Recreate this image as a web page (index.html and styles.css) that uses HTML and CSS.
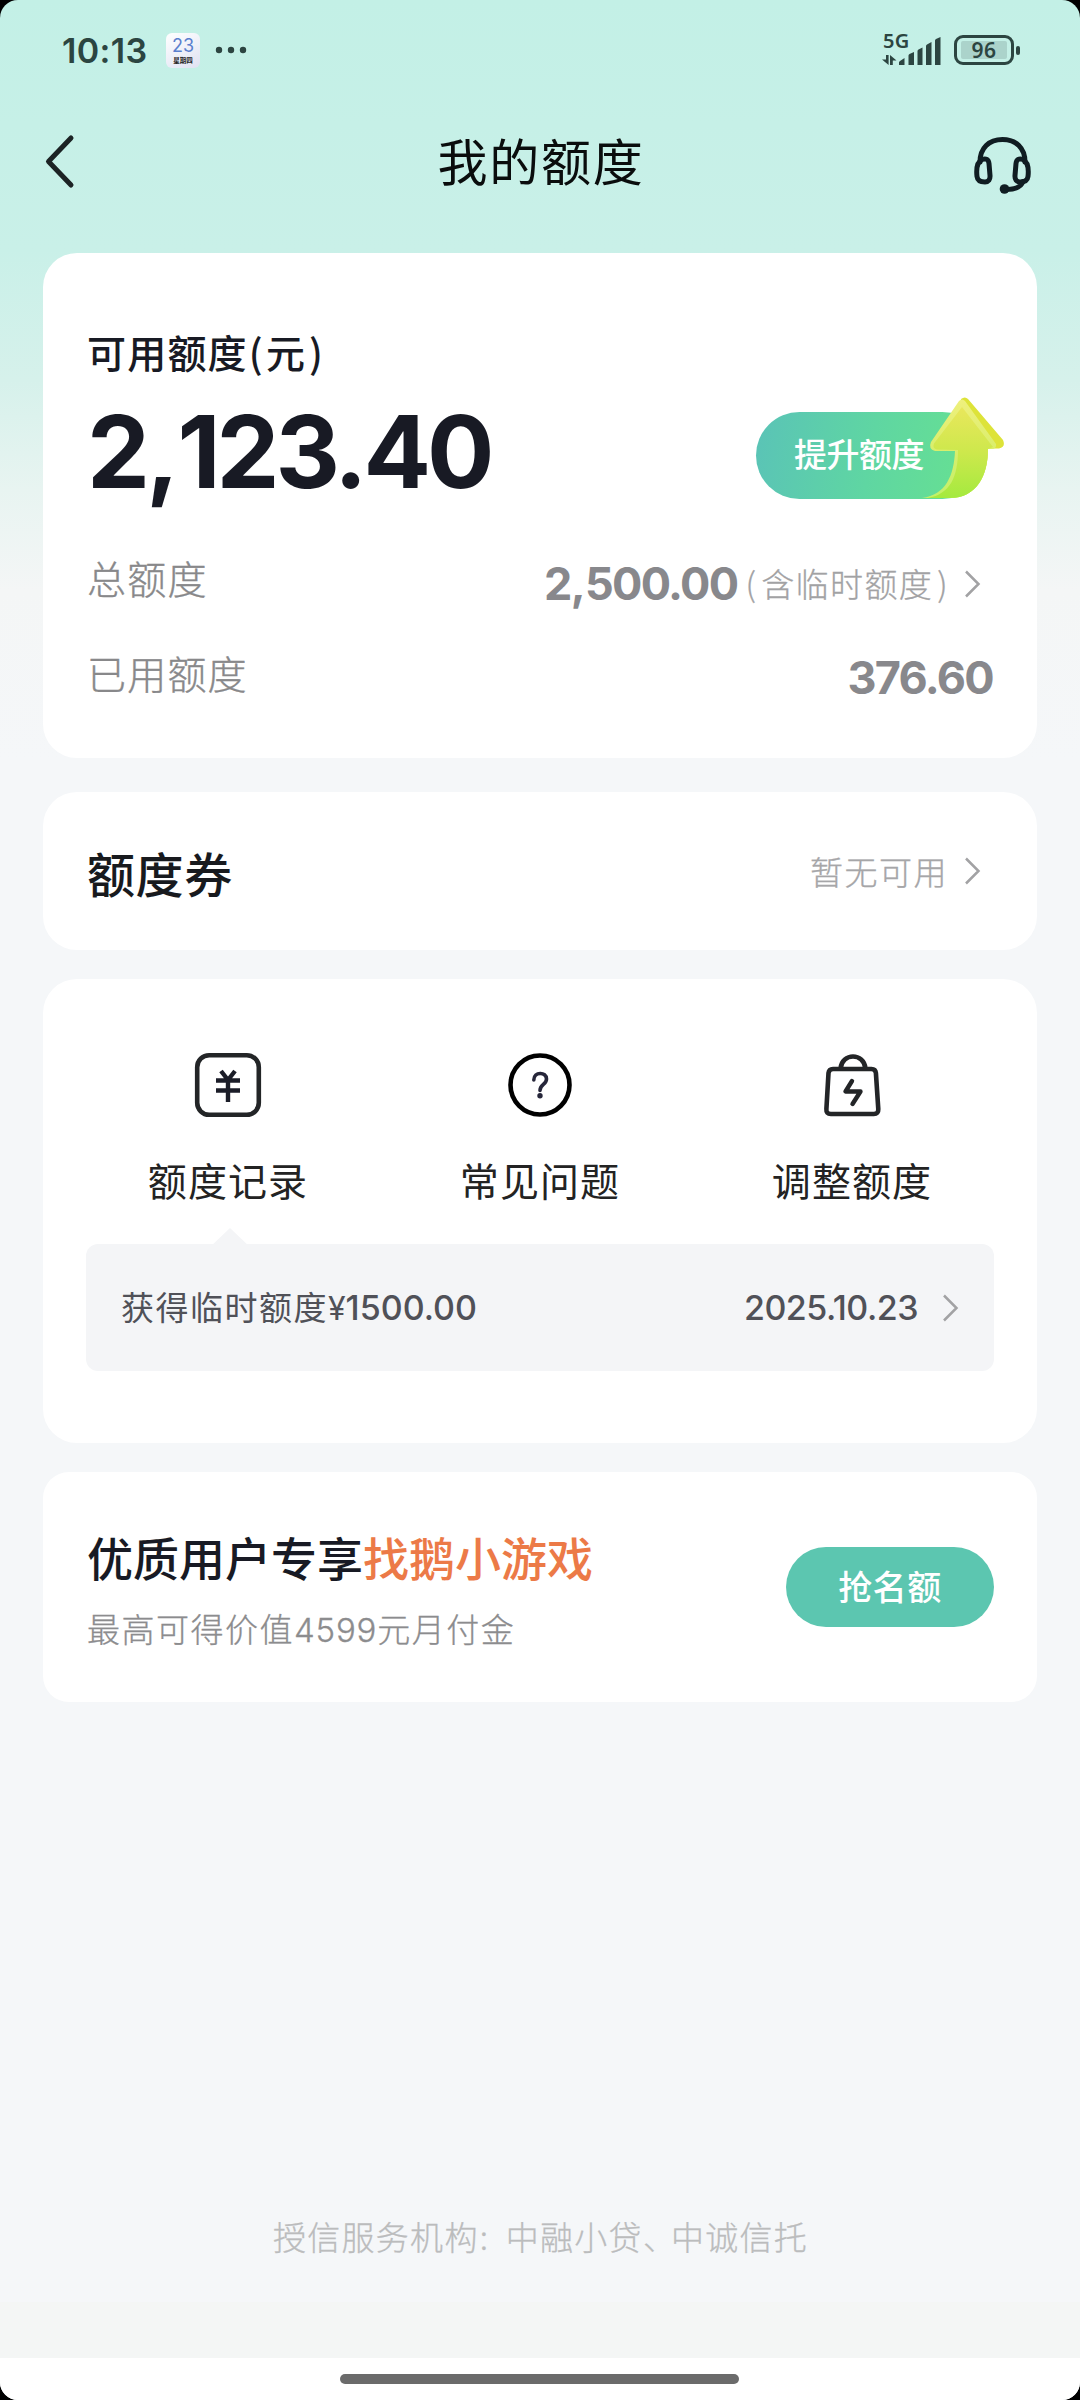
FILE: index.html
```html
<!DOCTYPE html>
<html lang="zh-CN">
<head>
<meta charset="utf-8">
<title>我的额度</title>
<link rel="stylesheet" href="styles.css">
</head>
<body>
<div class="screen">
  <div class="statusbar">
    <span class="clock">10:13</span>
    <span class="cal"><b>23</b><i>星期四</i></span>
    <svg class="dots" width="32" height="8" viewBox="0 0 32 8"><circle cx="4" cy="4" r="3.2"/><circle cx="16" cy="4" r="3.2"/><circle cx="28" cy="4" r="3.2"/></svg>
    <div class="signal">
      <span class="net">5G</span>
      <svg width="60" height="32" viewBox="0 0 60 32" fill="#2c4541">
        <path d="M4 21h2.600v10L0 25.500h4zM8 31V21l6.500 5.500H10.800V31z"/>
        <path d="M17 31v-2.500q0-1 1-1.500l4.500-3V31zM26.500 31V21.500q0-1 1-1.500l4.500-2V31zM35.500 31V17q0-1 1-1.500l4-2V31zM44 31V12q0-1 1-1.500l4.500-2.500V31zM53 31V6.500q0-1 1-1.500l4.500-2V31z"/>
      </svg>
    </div>
    <div class="battery"><span>96</span></div>
  </div>

  <header class="navbar">
    <svg class="back" width="32" height="56" viewBox="0 0 32 56"><path d="M27 5 4.500 28.500 27 52"/></svg>
    <h1>我的额度</h1>
    <svg class="headset" width="60" height="60" viewBox="0 0 60 60">
      <path d="M8 27C8 13 17 4.500 30.500 4.500S53 13 53 27"/>
      <path d="M10 24.500c4-1.500 6.500 0 7 4l1 12c.3 4-1.500 6.500-5 6.500-4.500 0-7.500-1.500-8-5.500-.8-7-.8-14 5-17zM51 24.500c-4-1.500-6.500 0-7 4l-1 12c-.3 4 1.500 6.500 5 6.500 4.500 0 7.500-1.500 8-5.500.8-7 .8-14-5-17z"/>
      <path d="M51 46.500q-3 8.500-18 8"/><circle class="mic" cx="32.500" cy="54" r="4.800"/>
    </svg>
  </header>

  <main class="cards">
    <section class="card quota">
      <div class="quota-title">可用额度<span class="paren open">(</span>元<span class="paren close">)</span></div>
      <div class="quota-main">
        <div class="amount">2<span class="sep">,</span>123<span class="point">.</span>40</div>
        <div class="raise"><span>提升额度</span>
          <svg class="arrow" width="92" height="102" viewBox="0 0 92 102">
            <defs>
              <linearGradient id="body" x1="0" y1="0" x2="0" y2="1"><stop offset="0" stop-color="#e9e75c"/><stop offset=".5" stop-color="#cde84c"/><stop offset="1" stop-color="#a4ea3f"/></linearGradient>
              <linearGradient id="edge" x1="0" y1="0" x2="0" y2="1"><stop offset="0" stop-color="#eff07c"/><stop offset=".5" stop-color="#d9ee6c"/><stop offset="1" stop-color="#c2f06a"/></linearGradient>
            </defs>
            <path fill="#dde339" d="M41 2q4-3 7 0L83 43q3 7-4 8.500H68C68 78 57 101 30 101H8C30 96 36 80 36 54z"/>
            <path fill="url(#edge)" d="M39 4q3-3 6 0L76 47q1 5-5 5H68C68 78 57 101 30 101H2C26 98 34 78 35 54L15 54q-7-2-4-9z"/>
            <path fill="url(#body)" d="M42 10 73 50l-5 2C68 78 57 101 30 101H8C30 97 38 80 38 53L17 52.500q-5-1-3-6z"/>
          </svg>
        </div>
      </div>
      <div class="row total"><span class="label">总额度</span>
        <span class="value"><b>2<span class="sep">,</span>500<span class="point">.</span>00</b><span class="note"><span class="np">(</span>含临时额度<span class="np end">)</span></span><svg class="chev" width="18" height="30" viewBox="0 0 18 30"><path d="M2 2.500 14.500 15 2 27.500"/></svg></span></div>
      <div class="row used"><span class="label">已用额度</span><span class="value"><b>376<span class="point">.</span>60</b></span></div>
    </section>

    <section class="card coupon">
      <h2>额度券</h2>
      <span class="value"><span class="none">暂无可用</span><svg class="chev" width="18" height="30" viewBox="0 0 18 30"><path d="M2 2.500 14.500 15 2 27.500"/></svg></span>
    </section>

    <section class="card tools">
      <div class="grid">
        <div class="tool">
          <svg width="70" height="70" viewBox="0 0 70 70"><rect x="4.200" y="5.200" width="61.600" height="59.600" rx="12"/><path class="yen" d="m28 21 7 9 7-9M23 30.500h24M23 40.500h24M35 30v22"/></svg>
          <span>额度记录</span>
        </div>
        <div class="tool">
          <svg class="black" width="70" height="70" viewBox="0 0 70 70"><circle cx="35" cy="35" r="29.500"/><path class="q" d="M28.800 30c0-8.500 12.700-8.500 12.700-1 0 5.500-6.500 5.500-6.500 11.500"/><circle class="qdot" cx="35" cy="45.800" r="2.700"/></svg>
          <span>常见问题</span>
        </div>
        <div class="tool">
          <svg width="70" height="70" viewBox="0 0 70 70"><path d="M16 19h38.500q4 0 4.400 4l2.400 36q.2 5-4.500 5H13.800Q9 64 9.400 59l2.100-36q.5-4 4.500-4zM23.500 18.500C25 2.500 47 2.500 48.500 18.500"/><path class="bolt" d="M35 31 28.500 41.500h15L35.500 54"/></svg>
          <span>调整额度</span>
        </div>
      </div>
      <div class="record">
        <span class="desc">获得临时额度<em><small>¥</small>1500.00</em></span>
        <span class="date">2025.10.23</span>
        <svg class="chev" width="18" height="30" viewBox="0 0 18 30"><path d="M2 2.500 14.500 15 2 27.500"/></svg>
      </div>
    </section>

    <section class="card promo">
      <div class="promo-text">
        <h3>优质用户专享<em>找鹅小游戏</em></h3>
        <p>最高可得价值<i>4599</i>元月付金</p>
      </div>
      <div class="grab">抢名额</div>
    </section>
  </main>

  <p class="org">授信服务机构<span class="colon">:</span>中融小贷<span class="comma">、</span>中诚信托</p>
  <div class="toolbar-gap"></div>
  <div class="homebar"><i></i></div>
</div>
</body>
</html>
```
FILE: styles.css
```css
* { box-sizing: border-box; margin: 0; padding: 0; }
html, body { background: #000; }
body { font-family: "Noto Sans CJK SC", sans-serif; width: 1080px; height: 2400px; overflow: hidden; }
i, em { font-style: normal; }
.screen {
  width: 1080px; height: 2400px; display: flex; flex-direction: column;
  border-radius: 18px; overflow: hidden;
  background: linear-gradient(180deg, #c3f0e6 0, #c9f0e8 250px, #d6f1eb 380px, #e8f4f1 490px, #f4f6f6 590px, #f5f7f9 760px);
}

.statusbar { height: 100px; display: flex; align-items: center; padding: 0 60px 0 62px; color: #2c4541; }
.clock { font: 600 34px/40px Inter, sans-serif; width: 104px; letter-spacing: .4px; padding-top: 1px; }
.cal {
  width: 34px; height: 35px; border-radius: 6px; background: linear-gradient(150deg, #fff, #dfe2f2);
  display: flex; flex-direction: column; align-items: center; margin-right: 15px;
}
.cal b { font: 400 18px/20px Inter, sans-serif; color: #5a7fce; margin-top: 3px; }
.cal i { font-size: 6.500px; font-weight: 700; line-height: 8px; color: #222; }
.dots { fill: #2c4541; }
.signal { margin-left: auto; width: 60px; height: 32px; display: grid; margin-right: 12px; }
.signal > * { grid-area: 1 / 1; }
.net { font: 600 20px/16px "Noto Sans", sans-serif; padding-left: 1px; margin-top: -1px; letter-spacing: .3px; }
.battery {
  position: relative; width: 60px; height: 30px; border: 3px solid #2c4541; border-radius: 9px;
  padding: 3px 4px; display: flex; margin-right: 6px;
}
.battery span { flex: 1; background: #abd3cb; border-radius: 2px; font: 600 21px/18px "Noto Sans", sans-serif; text-align: center; letter-spacing: .5px; }
.battery::after { content: ""; position: absolute; right: -9px; top: 8px; width: 4px; height: 9px; border-radius: 2px; background: #2c4541; }

.navbar { height: 153px; display: flex; justify-content: space-between; padding: 33px 48px 0 44px; }
.back { fill: none; stroke: #1c2324; stroke-width: 5; stroke-linecap: round; stroke-linejoin: round; }
.navbar h1 { font-size: 50px; line-height: 58px; font-weight: 400; letter-spacing: 1.700px; color: #0a0d0d; padding-left: 34px; margin-top: -3px; }
.headset { fill: none; stroke: #101d22; stroke-width: 5; stroke-linecap: round; margin-top: 2px; }
.headset .mic { fill: #101d22; stroke: none; }

.cards { padding: 0 43px; display: flex; flex-direction: column; }
.card { background: #fff; border-radius: 34px; padding: 0 43px 0 44px; }
.chev { fill: none; stroke: #a2a2a4; stroke-width: 2.500; flex: none; }

.quota { height: 505px; padding-top: 73px; }
.quota-title { font-size: 39px; line-height: 50px; font-weight: 500; letter-spacing: 1.200px; color: #181a24; white-space: nowrap; }
.paren.open { padding: 0 2px 0 1px; }
.paren.close { padding-left: 3px; }
.quota-main { height: 106px; display: flex; justify-content: space-between; align-items: center; margin-top: 26px; }
.amount { font: 700 100px/106px Inter, sans-serif; color: #181a24; letter-spacing: -4px; margin-top: -6px; }
.amount .sep { padding-right: 2px; }
.raise {
  position: relative; width: 230px; height: 87px; margin-right: 8px; border-radius: 44px;
  background: linear-gradient(100deg, #5ac3b7 0, #5fd6a2 50%, #68e28f 100%);
  color: #fff; font-size: 33px; font-weight: 500; line-height: 82px; padding-left: 38px; letter-spacing: -.5px;
}
.arrow { position: absolute; left: 164px; top: -15px; }
.row { display: flex; justify-content: space-between; }
.row .label { font-size: 39px; line-height: 50px; font-weight: 300; letter-spacing: 1.200px; color: #88888a; -webkit-text-stroke: .4px; }
.row .value { display: flex; align-items: center; height: 50px; }
.row b { font: 700 45px/50px Inter, sans-serif; color: #88888c; letter-spacing: -1.700px; }
.row b .sep { padding-right: 1px; }
.row.total { margin-top: 44px; }
.row.used { margin-top: 38px; }
.total .value { padding-right: 12px; margin-top: 7px; }
.used .value { margin-top: 6px; padding-right: 1px; }
.note { font-size: 33px; line-height: 50px; font-weight: 300; letter-spacing: 1.400px; color: #a2a2a4; margin: -2px 15px 0 8px; white-space: nowrap; -webkit-text-stroke: .3px; }
.np:first-child { padding-right: 4px; }
.np.end { padding-left: 4px; }

.coupon { height: 158px; margin-top: 34px; display: flex; align-items: center; justify-content: space-between; }
.coupon h2 { font-size: 48px; font-weight: 500; letter-spacing: .6px; color: #181a1e; padding-top: 1px; }
.coupon .value { display: flex; align-items: center; padding-right: 12px; }
.none { font-size: 33px; font-weight: 300; letter-spacing: 1.500px; color: #a6a6a8; margin-right: 16px; -webkit-text-stroke: .3px; }

.tools { height: 464px; margin-top: 29px; padding-top: 71px; }
.grid { display: grid; grid-template-columns: repeat(3, 312px); margin-left: -15px; }
.tool { display: flex; flex-direction: column; align-items: center; }
.tool svg { fill: none; stroke: #232527; stroke-width: 4.600; stroke-linecap: round; }
.tool svg.black { stroke: #000; }
.tool .yen { stroke-width: 4.400; stroke-linecap: butt; stroke: #1b1d28; }
.tool .q { stroke-width: 3.600; stroke: #26263a; }
.tool .qdot { fill: #26263a; stroke: none; }
.tool .bolt { stroke-linejoin: round; stroke-width: 4.400; }
.tool span { font-size: 39px; line-height: 50px; letter-spacing: 1.100px; color: #232323; margin-top: 34px; }
.record {
  position: relative; height: 127px; margin: 40px 0 0 -1px; border-radius: 12px; background: #f4f5f7;
  display: flex; align-items: center; padding: 0 34px 0 35px; color: #505158;
}
.record::before {
  content: ""; position: absolute; left: 123px; top: -16px; width: 42px; height: 20px;
  background: #f4f5f7; clip-path: polygon(50% 0, 100% 100%, 0 100%);
}
.desc { font-size: 33px; font-weight: 400; letter-spacing: 1.500px; margin-top: -3px; }
.desc em, .date { font: 500 34px/40px Inter, sans-serif; letter-spacing: -.5px; }
.desc em { letter-spacing: 0; }
.desc small { font-size: 32px; font-weight: 400; }
.date { margin-left: auto; margin-right: 24px; }

.promo { height: 230px; margin-top: 29px; border-radius: 26px; display: flex; justify-content: space-between; align-items: center; }
.promo h3 { font-size: 46px; line-height: 60px; font-weight: 500; color: #181a24; white-space: nowrap; margin-top: 4px; }
.promo h3 em { color: #ec7a47; }
.promo p { font-size: 33px; line-height: 44px; font-weight: 300; letter-spacing: 1.500px; color: #8c8c8e; margin-top: 20px; -webkit-text-stroke: .3px; }
.promo p i { font: 300 33px/44px Inter, sans-serif; letter-spacing: .8px; }
.grab { width: 208px; height: 80px; border-radius: 40px; background: #5cc6b0; color: #fff; font-size: 34px; line-height: 77px; font-weight: 500; text-align: center; letter-spacing: .5px; }

.org { margin-top: auto; height: 88px; font-size: 33px; line-height: 44px; font-weight: 300; letter-spacing: 1.300px; color: #bbbcbd; text-align: center; -webkit-text-stroke: .3px; padding-left: 1px; }
.colon { display: inline-block; width: 27px; padding-left: 1px; text-align: left; }
.comma { display: inline-block; width: 28px; text-align: left; font-feature-settings: "halt"; }
.toolbar-gap { height: 56px; background: #f4f6f5; }
.homebar { height: 42px; background: #fff; display: flex; justify-content: center; padding: 16px 1px 0 0; }
.homebar i { width: 399px; height: 10px; border-radius: 5px; background: #6b6b6b; }
```
